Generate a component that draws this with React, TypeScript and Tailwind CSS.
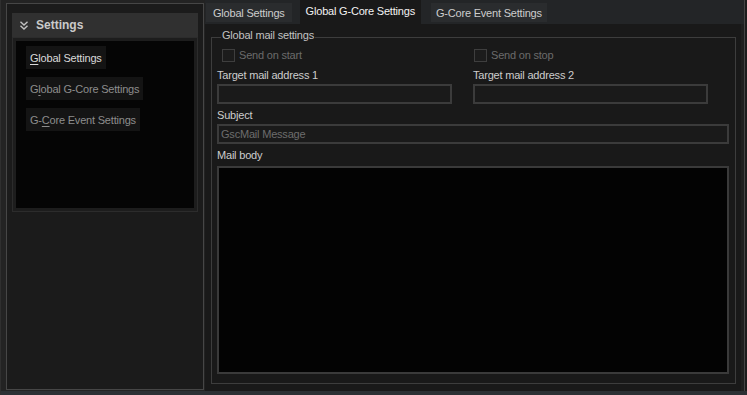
import React from "react";

function ChevronsDown() {
  return (
    <svg width="8" height="9" viewBox="0 0 8 9" fill="none" stroke="#c2c2c2" strokeWidth="1.4" strokeLinecap="square">
      <path d="M1 1.2l3 2.8 3-2.8M1 5.2l3 2.8 3-2.8" />
    </svg>
  );
}

// label with an underlined access-key letter, like a WinForms mnemonic
function Mnemonic({ pre, letter, post }: { pre: string; letter: string; post: string }) {
  return (
    <span>
      {pre}
      <span className="underline underline-offset-[2px]">{letter}</span>
      {post}
    </span>
  );
}

function NavItem({ children, active = false }: { children: React.ReactNode; active?: boolean }) {
  return (
    <div
      className={`h-[23px] px-[4px] flex items-center bg-[#141414] ${active ? "text-[#dadada]" : "text-[#8d8d8d]"}`}
    >
      {children}
    </div>
  );
}

function CheckRow({ label, offset }: { label: string; offset: string }) {
  return (
    <div className={`h-[14px] flex items-center gap-[4px] ${offset}`}>
      <span className="w-[13px] h-[13px] border border-[#3e3e3e] bg-[#1c1c1c]" />
      <span className="text-[#6b6b6b]">{label}</span>
    </div>
  );
}

function Field({ label, value = "" }: { label: string; value?: string }) {
  return (
    <div className="flex flex-col">
      <div className="mt-[6px] h-[14px] text-[#cdcdcd]">{label}</div>
      <input
        readOnly
        value={value}
        className="mt-[2px] h-[20px] w-full border-2 border-[#3b3b3b] bg-[#1a1a1a] px-[2px] text-[#6d6d6d] outline-none"
      />
    </div>
  );
}

export default function App() {
  return (
    <div className="w-[747px] h-[395px] flex flex-col overflow-hidden bg-[#232323] border-l border-l-[#2f2f2f] font-['Liberation_Sans',Arial,sans-serif] text-[11px] leading-[14px] tracking-[-0.2px]">
      <div className="flex h-[391px]">
        {/* Settings navigation */}
        <div className="ml-[5px] mt-[3px] w-[198px] h-[387px] border border-[#464646] bg-[#1b1b1b] px-[5px] pt-[9px]">
          <div className="h-[24px] bg-[#303030] flex items-center pl-[8px] gap-[8px]">
            <ChevronsDown />
            <span className="text-[12px] font-bold tracking-normal text-[#cacaca]">Settings</span>
          </div>
          <div className="h-[175px] border border-[#2c2c2c] bg-[#1d1d1d] p-[3px]">
            <div className="h-full bg-[#050505] pl-[10px] pt-[5px] flex flex-col items-start gap-[8px]">
              <NavItem active>
                <Mnemonic pre="" letter="G" post="lobal Settings" />
              </NavItem>
              <NavItem>
                <Mnemonic pre="G" letter="l" post="obal G-Core Settings" />
              </NavItem>
              <NavItem>
                <Mnemonic pre="G-" letter="C" post="ore Event Settings" />
              </NavItem>
            </div>
          </div>
        </div>

        {/* Tabs + page */}
        <div className="ml-[1px] w-[536px] flex flex-col">
          <div className="h-[24px] flex items-start bg-[#232527] pl-[1px]">
            <div className="mt-[3px] h-[19px] px-[7px] flex items-center bg-[#2a2c2e] text-[#cdcdcd]">
              Global Settings
            </div>
            <div className="ml-[8px] h-[24px] px-[6px] pt-[4px] bg-[#191919] text-[#f3f3f3]">
              Global G-Core Settings
            </div>
            <div className="ml-[10px] mt-[3px] h-[19px] px-[5px] flex items-center bg-[#2a2c2e] text-[#cdcdcd]">
              G-Core Event Settings
            </div>
          </div>

          <div className="flex-1 flex flex-col bg-[#191919] pl-[6px] pr-[5px] pt-[13px] pb-[7px]">
            <div className="relative flex-1 flex flex-col border border-[#3d3d3d] pt-[10px] pl-[5px] pr-[6px] pb-[9px]">
              <span className="absolute -top-[10px] left-[9px] px-[1px] bg-[#191919] text-[#c2c2c2]">
                Global mail settings
              </span>

              <div className="flex gap-[21px]">
                <div className="w-[235px] flex flex-col">
                  <CheckRow label="Send on start" offset="ml-[5px]" />
                  <Field label="Target mail address 1" />
                </div>
                <div className="w-[235px] flex flex-col">
                  <CheckRow label="Send on stop" offset="ml-[1px]" />
                  <Field label="Target mail address 2" />
                </div>
              </div>

              <div className="mt-[4px] h-[14px] text-[#cdcdcd]">Subject</div>
              <input
                readOnly
                value="GscMail Message"
                className="mt-[2px] h-[20px] w-full border-2 border-[#3b3b3b] bg-[#1a1a1a] px-[2px] text-[#6d6d6d] outline-none"
              />

              <div className="mt-[4px] h-[14px] text-[#cdcdcd]">Mail body</div>
              <textarea
                readOnly
                className="mt-[4px] flex-1 w-full resize-none border-2 border-[#3a3a3a] bg-[#030303] outline-none"
              />
            </div>
          </div>
        </div>

        <div className="w-[6px] flex">
          <div className="w-[3px] flex flex-col">
            <div className="h-[24px] bg-[#232527]" />
            <div className="flex-1 bg-[#1f1f1f]" />
          </div>
          <div className="w-[1px] bg-[#454545]" />
          <div className="w-[2px] bg-[#1c1c1c]" />
        </div>
      </div>
      <div className="h-[4px] bg-[#2c3034]" />
    </div>
  );
}
